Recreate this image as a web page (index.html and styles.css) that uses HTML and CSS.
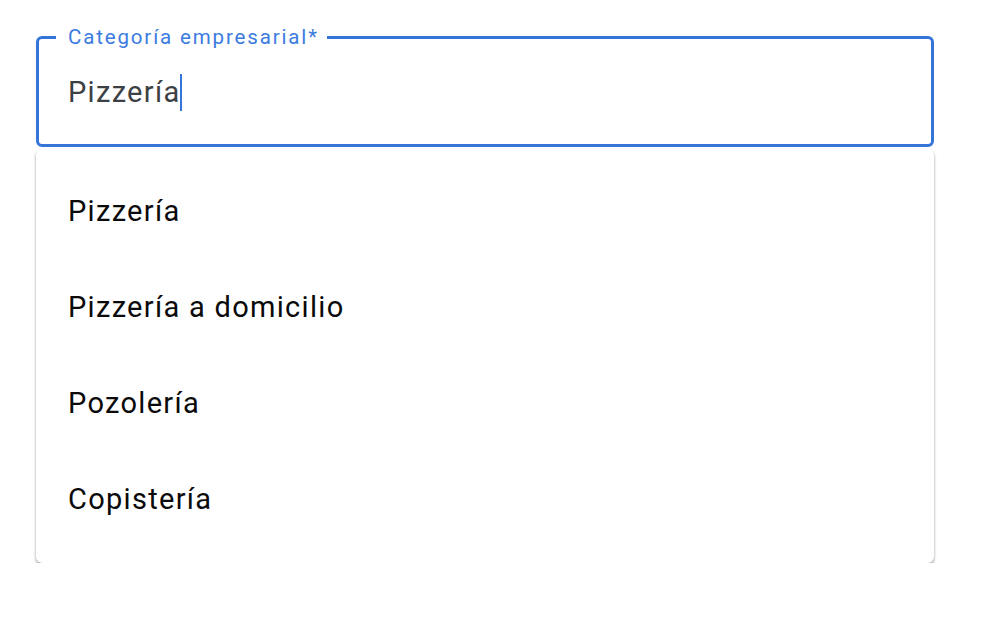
FILE: index.html
```html
<!DOCTYPE html>
<html lang="es">
<head>
<meta charset="utf-8">
<link rel="stylesheet" href="styles.css">
</head>
<body>
<div class="wrap">
  <fieldset class="field">
    <legend class="label">Categoría empresarial*</legend>
    <div class="value">Pizzería<span class="caret"></span></div>
  </fieldset>
  <ul class="menu">
    <li class="item">Pizzería</li>
    <li class="item">Pizzería a domicilio</li>
    <li class="item">Pozolería</li>
    <li class="item">Copistería</li>
  </ul>
</div>
</body>
</html>
```
FILE: styles.css
```css
html, body {
  margin: 0;
  padding: 0;
  background: #ffffff;
  font-family: Roboto, "Liberation Sans", Arial, sans-serif;
}
.wrap {
  padding: 26px 0 0 36px;
  width: 898px;
}
.field {
  margin: 0;
  box-sizing: border-box;
  width: 898px;
  height: 121px;
  border: 3px solid #3574d9;
  border-radius: 6px;
  padding: 0 0 0 29px;
}
.label {
  font-size: 20.5px;
  letter-spacing: 1.85px;
  color: #3b7be0;
  padding: 0 8px 0 12px;
  margin-left: -12px;
  line-height: 22px;
}
.value {
  margin-top: 24px;
  font-size: 29px;
  letter-spacing: 1.3px;
  line-height: 40px;
  color: #3c4043;
  display: flex;
  align-items: center;
}
.caret {
  display: inline-block;
  width: 2px;
  height: 37px;
  background: #3574d9;
  margin-left: 0;
}
.menu {
  list-style: none;
  margin: 2px 0 0 0;
  padding: 14px 0 16px;
  background: #fff;
  border-radius: 6px;
  box-shadow: 0 2px 3px rgba(0,0,0,0.4), 0 0 1px rgba(0,0,0,0.05);
}
.item {
  height: 96px;
  line-height: 96px;
  padding-left: 32px;
  font-size: 29px;
  letter-spacing: 1.3px;
  color: #0a0a0a;
}
```
